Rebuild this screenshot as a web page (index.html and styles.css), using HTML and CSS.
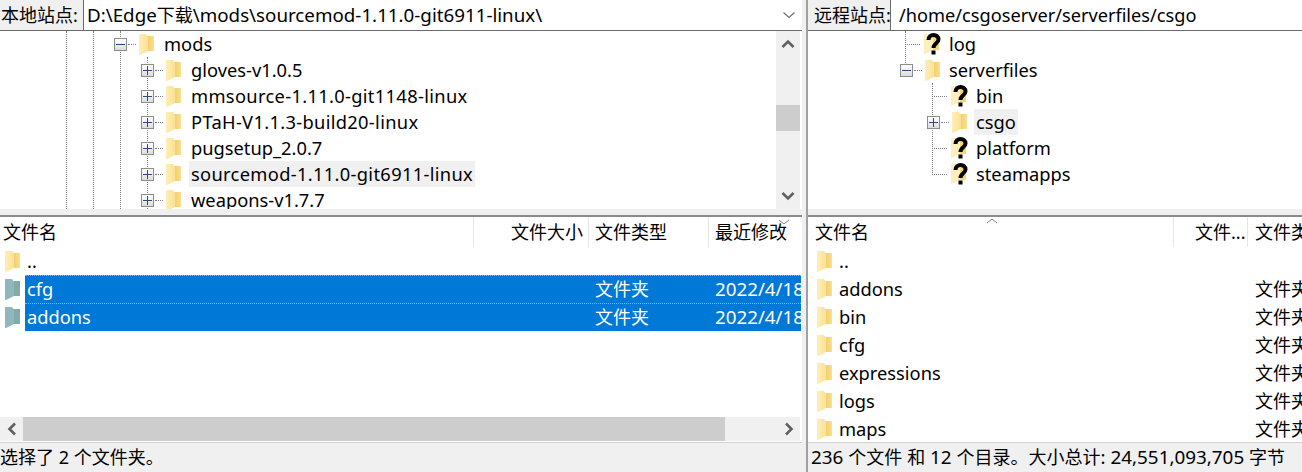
FILE: index.html
```html
<!DOCTYPE html>
<html lang="zh">
<head>
<meta charset="utf-8">
<title>FileZilla</title>
<link rel="stylesheet" href="styles.css">
</head>
<body>
<svg class="defs" width="0" height="0" aria-hidden="true">
  <defs>
    <linearGradient id="fb" x1="0" x2="1" y1="0" y2="0"><stop offset="0" stop-color="#f0c658"/><stop offset="1" stop-color="#fadf92"/></linearGradient>
    <linearGradient id="ff" x1="0" x2="1" y1="0" y2="0"><stop offset="0" stop-color="#feeeb8"/><stop offset="1" stop-color="#fbe193"/></linearGradient>
    <symbol id="folder" viewBox="0 0 15 21">
      <path d="M6 2H15V17H6Z" fill="url(#fb)"/>
      <path d="M0 0H7L9 3V17L1 21H0Z" fill="url(#ff)"/>
    </symbol>
    <symbol id="folder-sel" viewBox="0 0 15 21">
      <path d="M6 2H15V17H6Z" fill="#82aaaa"/>
      <path d="M0 0H7L9 3V17L1 21H0Z" fill="#90b7bd"/>
    </symbol>
    <symbol id="unknown" viewBox="0 0 18 24">
      <path d="M6 3H15V18H6Z" fill="#f6d679"/>
      <path d="M0 2H7L9 4V18L1 22H0Z" fill="#fdeebb"/>
      <path d="M4.500 8C4.500 1.500 14.500 1.500 14.500 7.500C14.500 11.500 9.500 11 9.500 16" fill="none" stroke="#000" stroke-width="4"/>
      <rect x="7.500" y="18.500" width="4" height="4" fill="#000"/>
    </symbol>
  </defs>
</svg>
<main class="app">
  <section class="pane pane-local">
    <header class="site-bar">
      <span class="site-label">本地站点:</span>
      <div class="site-input">
        <span class="site-path">D:\Edge<span class="cjk">下载</span>\mods\sourcemod-1.11.0-git6911-linux\</span>
        <svg class="combo-arrow" width="14" height="8" viewBox="0 0 14 8"><path d="M1.500 1.500L7 6.500L12.500 1.500" fill="none" stroke="#707070" stroke-width="1.200"/></svg>
      </div>
    </header>
    <div class="tree-area">
      <div class="tree">
        <i class="vline vl-a"></i><i class="vline vl-b"></i><i class="vline vl-c"></i><i class="vline vl-d"></i>
        <div class="row l-mods"><span class="exp minus"></span><span class="conn short"></span><svg class="ico"><use href="#folder"/></svg><span class="name">mods</span></div>
        <div class="row l-child"><span class="exp plus"></span><span class="conn short"></span><svg class="ico"><use href="#folder"/></svg><span class="name">gloves-v1.0.5</span></div>
        <div class="row l-child"><span class="exp plus"></span><span class="conn short"></span><svg class="ico"><use href="#folder"/></svg><span class="name long">mmsource-1.11.0-git1148-linux</span></div>
        <div class="row l-child"><span class="exp plus"></span><span class="conn short"></span><svg class="ico"><use href="#folder"/></svg><span class="name long">PTaH-V1.1.3-build20-linux</span></div>
        <div class="row l-child"><span class="exp plus"></span><span class="conn short"></span><svg class="ico"><use href="#folder"/></svg><span class="name">pugsetup_2.0.7</span></div>
        <div class="row l-child"><span class="exp plus"></span><span class="conn short"></span><svg class="ico"><use href="#folder"/></svg><span class="name long hover">sourcemod-1.11.0-git6911-linux</span></div>
        <div class="row l-child"><span class="exp plus"></span><span class="conn short"></span><svg class="ico"><use href="#folder"/></svg><span class="name">weapons-v1.7.7</span></div>
      </div>
      <div class="vscroll">
        <div class="sb-btn"><svg width="14" height="10" viewBox="0 0 14 10"><path d="M1.500 8L7 2.500L12.500 8" fill="none" stroke="#606060" stroke-width="2.600"/></svg></div>
        <div class="sb-gap"></div>
        <div class="sb-thumb"></div>
        <div class="sb-fill"></div>
        <div class="sb-btn"><svg width="14" height="10" viewBox="0 0 14 10"><path d="M1.500 2L7 7.500L12.500 2" fill="none" stroke="#606060" stroke-width="2.600"/></svg></div>
      </div>
    </div>
    <div class="splitter"></div>
    <div class="list-head cols-local">
      <span class="col c-name">文件名</span>
      <span class="col c-size">文件大小</span>
      <span class="col c-type">文件类型</span>
      <span class="col c-date">最近修改<svg class="sort" width="12" height="6" viewBox="0 0 12 6"><path d="M1 1L6 5L11 1" fill="none" stroke="#808080"/></svg></span>
    </div>
    <div class="list list-local">
      <div class="frow"><svg class="ico"><use href="#folder"/></svg><div class="fcells cols-local-body"><span>..</span></div></div>
      <div class="frow"><svg class="ico"><use href="#folder-sel"/></svg><div class="fcells cols-local-body sel"><span>cfg</span><span></span><span class="t-type">文件夹</span><span class="t-date">2022/4/18</span></div></div>
      <div class="frow"><svg class="ico"><use href="#folder-sel"/></svg><div class="fcells cols-local-body sel"><span>addons</span><span></span><span class="t-type">文件夹</span><span class="t-date">2022/4/18</span></div></div>
    </div>
    <div class="hscroll">
      <div class="hb"><svg width="10" height="14" viewBox="0 0 10 14"><path d="M8 1.500L2.500 7L8 12.500" fill="none" stroke="#606060" stroke-width="2.600"/></svg></div>
      <div class="h-thumb"></div>
      <div class="h-fill"></div>
      <div class="hb"><svg width="10" height="14" viewBox="0 0 10 14"><path d="M2 1.500L7.500 7L2 12.500" fill="none" stroke="#606060" stroke-width="2.600"/></svg></div>
    </div>
    <footer class="status">选择了 2 个文件夹。</footer>
  </section>

  <div class="sash"></div>

  <section class="pane pane-remote">
    <header class="site-bar">
      <span class="site-label remote-label">远程站点:</span>
      <div class="site-input"><span class="site-path remote-path">/home/csgoserver/serverfiles/csgo</span></div>
    </header>
    <div class="tree-area">
      <div class="tree">
        <i class="vline vr-a"></i><i class="vline vr-b"></i>
        <div class="row r-log"><span class="conn c15"></span><svg class="ico q"><use href="#unknown"/></svg><span class="name">log</span></div>
        <div class="row r-srv"><span class="exp minus"></span><span class="conn short"></span><svg class="ico"><use href="#folder"/></svg><span class="name">serverfiles</span></div>
        <div class="row r-sub"><span class="conn c15"></span><svg class="ico q"><use href="#unknown"/></svg><span class="name">bin</span></div>
        <div class="row r-exp"><span class="exp plus"></span><span class="conn short"></span><svg class="ico"><use href="#folder"/></svg><span class="name hover">csgo</span></div>
        <div class="row r-sub"><span class="conn c15"></span><svg class="ico q"><use href="#unknown"/></svg><span class="name">platform</span></div>
        <div class="row r-sub"><span class="conn c15"></span><svg class="ico q"><use href="#unknown"/></svg><span class="name">steamapps</span></div>
      </div>
    </div>
    <div class="splitter"></div>
    <div class="list-head cols-remote">
      <span class="col r-name">文件名<svg class="sort-up" width="12" height="6" viewBox="0 0 12 6"><path d="M1 5L6 1L11 5" fill="none" stroke="#808080"/></svg></span>
      <span class="col r-size">文件...</span>
      <span class="col r-type">文件类型</span>
    </div>
    <div class="list list-remote">
      <div class="frow"><svg class="ico"><use href="#folder"/></svg><div class="fcells cols-remote-body"><span>..</span></div></div>
      <div class="frow"><svg class="ico"><use href="#folder"/></svg><div class="fcells cols-remote-body"><span>addons</span><span class="t-type">文件夹</span></div></div>
      <div class="frow"><svg class="ico"><use href="#folder"/></svg><div class="fcells cols-remote-body"><span>bin</span><span class="t-type">文件夹</span></div></div>
      <div class="frow"><svg class="ico"><use href="#folder"/></svg><div class="fcells cols-remote-body"><span>cfg</span><span class="t-type">文件夹</span></div></div>
      <div class="frow"><svg class="ico"><use href="#folder"/></svg><div class="fcells cols-remote-body"><span>expressions</span><span class="t-type">文件夹</span></div></div>
      <div class="frow"><svg class="ico"><use href="#folder"/></svg><div class="fcells cols-remote-body"><span>logs</span><span class="t-type">文件夹</span></div></div>
      <div class="frow"><svg class="ico"><use href="#folder"/></svg><div class="fcells cols-remote-body"><span>maps</span><span class="t-type">文件夹</span></div></div>
    </div>
    <footer class="status remote-status">236 <span class="cjk">个文件</span> <span class="cjk">和</span> 12 <span class="cjk">个目录。大小总计</span>: 24,551,093,705 <span class="cjk">字节</span></footer>
  </section>
</main>
</body>
</html>
```
FILE: styles.css
```css
* { box-sizing: border-box; }
html, body { margin: 0; height: 100%; }
body {
  width: 1302px;
  height: 472px;
  overflow: hidden;
  background: #fff;
  color: #000;
  font: 18.3px/26px "Noto Sans", "Noto Sans CJK SC", sans-serif;
}
.cjk { font-size: 18px; }
.defs { position: absolute; }
.app { display: flex; height: 472px; }
.pane { display: flex; flex-direction: column; height: 472px; overflow: hidden; background: #fff; }
.pane-local { width: 802px; }
.pane-remote { width: 494px; flex: 1; }
.sash { width: 6px; background: #f0f0f0; border-right: 2px solid #a0a0a0; }

.site-bar { display: flex; height: 31px; flex: none; border-bottom: 1px solid #696969; }
.site-label {
  width: 84px;
  padding-left: 1px;
  background: #f0f0f0;
  border-right: 1px solid #696969;
  font-size: 18px;
  line-height: 30px;
  white-space: nowrap;
}
.remote-label { width: 83px; padding-left: 6px; }
.site-input { flex: 1; display: flex; align-items: center; padding: 0 6px 0 3px; justify-content: space-between; }
.remote-path { padding-left: 5px; font-size: 18.2px; }
.site-path { white-space: nowrap; line-height: 30px; }
.pane-local .site-path { font-size: 18.75px; }
.combo-arrow { flex: none; }

.tree-area { display: flex; height: 178px; flex: none; overflow: hidden; }
.tree { position: relative; flex: 1; overflow: hidden; }
.row { display: flex; align-items: center; height: 26px; white-space: nowrap; }
.l-mods { padding-left: 114px; }
.l-child { padding-left: 141px; }
.r-log { padding-left: 97px; }
.r-srv { padding-left: 92px; }
.r-sub { padding-left: 124px; }
.r-exp { padding-left: 119px; }
.exp {
  position: relative;
  flex: none;
  width: 13px;
  height: 13px;
  border: 1px solid #8c8c8c;
  background: linear-gradient(#fff, #dcdcdc);
}
.exp::before, .plus::after { content: ""; position: absolute; background: #2c4a7c; }
.exp::before { left: 1px; right: 1px; top: 5px; height: 1px; }
.plus::after { top: 1px; bottom: 1px; left: 5px; width: 1px; }
.conn { flex: none; height: 0; border-top: 1px dotted #808080; }
.short { width: 8px; margin-left: 1px; margin-right: 3px; }
.c15 { width: 15px; margin-right: 4px; }
.ico { flex: none; width: 15px; height: 21px; }
.q { width: 18px; height: 24px; margin-right: -1px; }
.name { margin-left: 8px; padding: 0 2px; line-height: 26px; }
.long { letter-spacing: 0.33px; }
.pane-remote .name { margin-left: 7px; }
.pane-remote .q + .name { margin-left: 6px; }
.hover { background: #f0f0f0; }
.vline { position: absolute; width: 0; border-left: 1px dotted #808080; }
.vl-a { left: 66px; top: 0; bottom: 0; }
.vl-b { left: 93px; top: 0; bottom: 0; }
.vl-c { left: 120px; top: 0; bottom: 0; }
.vl-d { left: 147px; top: 26px; bottom: 0; }
.vr-a { left: 97px; top: 0; height: 34px; }
.vr-b { left: 124px; top: 52px; height: 92px; }

.vscroll { display: flex; flex-direction: column; width: 24px; margin-right: 2px; flex: none; background: #f0f0f0; }
.sb-btn { height: 26px; flex: none; display: flex; align-items: center; justify-content: center; }
.sb-gap { height: 48px; flex: none; }
.sb-thumb { height: 26px; flex: none; background: #cdcdcd; }
.sb-fill { flex: 1; }

.splitter { height: 8px; flex: none; background: #f0f0f0; border-bottom: 2px solid #8a8a8a; }
.list-head { display: grid; height: 30px; flex: none; font-size: 18px; line-height: 30px; }
.cols-local { grid-template-columns: 474px 115px 120px 1fr; }
.cols-remote { grid-template-columns: 366px 74px 1fr; }
.col { position: relative; white-space: nowrap; border-right: 1px solid #e5e5e5; padding-left: 3px; height: 30px; }
.col:last-child { border-right: 0; padding-left: 6px; }
.c-size { text-align: right; padding-right: 5px; padding-left: 0; }
.c-type { padding-left: 6px; }
.r-name { padding-left: 7px; }
.r-size { padding-left: 21px; }
.col.r-type { padding-left: 7px; }
.sort { position: absolute; right: 12px; top: 2px; }
.sort-up { position: absolute; left: 178px; top: 1px; }

.list { flex: none; overflow: hidden; }
.list-local { height: 170px; }
.list-remote { height: 195px; }
.frow { display: flex; align-items: center; height: 28px; }
.frow .ico { margin-left: 5px; margin-right: 5px; }
.list-remote .frow .ico { margin-left: 9px; }
.fcells { flex: 1; display: grid; height: 28px; line-height: 28px; white-space: nowrap; overflow: hidden; padding-left: 2px; }
.fcells span { overflow: hidden; }
.cols-local-body { grid-template-columns: 446px 115px 120px 1fr; margin-right: 1px; }
.cols-remote-body { grid-template-columns: 416px 1fr; }
.t-type, .t-date { padding-left: 7px; }
.t-date { font-size: 18.75px; }
.t-type { font-size: 18px; }
.cols-remote-body .t-type { padding-left: 0; }
.sel { background: #0078d7; color: #fff; border-top: 1px dotted #e0a060; line-height: 26px; }

.hscroll { display: flex; height: 24px; flex: none; background: #f0f0f0; margin-right: 2px; }
.hb { width: 23px; flex: none; display: flex; align-items: center; justify-content: center; }
.h-thumb { width: 702px; flex: none; background: #cdcdcd; }
.h-fill { flex: 1; }

.status {
  flex: 1;
  margin-top: 1px;
  border-top: 1px solid #d0d0d0;
  background: #f0f0f0;
  font-size: 18px;
  line-height: 29px;
  white-space: nowrap;
}
.remote-status { margin-top: 0; padding-left: 3px; font-size: 18.85px; }
```
